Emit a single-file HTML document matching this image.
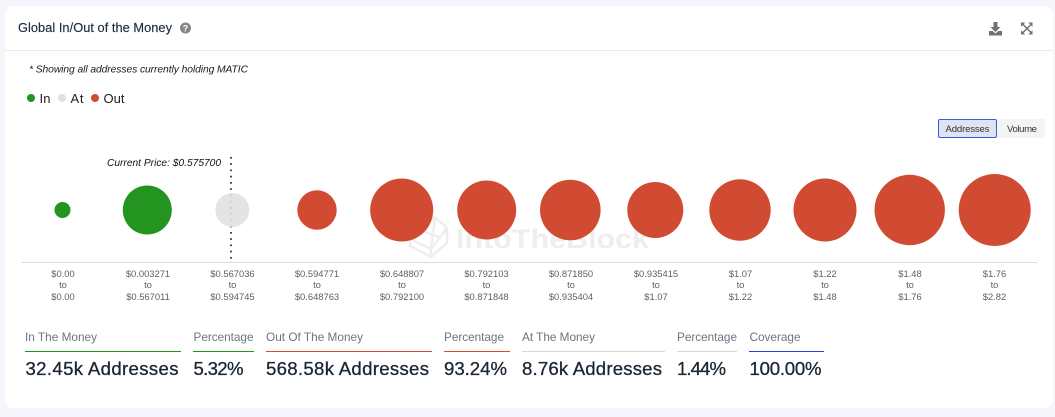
<!DOCTYPE html>
<html><head><meta charset="utf-8"><style>
html,body{margin:0;padding:0;background:#f5f6fb;width:1055px;height:417px;overflow:hidden}
svg{display:block}
text{font-family:"Liberation Sans",sans-serif}
.l{font-size:9.4px;fill:#5a5f66;text-anchor:middle}
.h{font-size:11.8px;fill:#6b7580}
.v{font-size:18.6px;fill:#1a2634;stroke:#1a2634;stroke-width:.3}
</style></head><body>
<svg width="1055" height="417" viewBox="0 0 1055 417" xmlns="http://www.w3.org/2000/svg">
<rect x="5" y="7" width="1048" height="402.500" rx="8" fill="#eceef4"/>
<rect x="5" y="6" width="1048" height="402.500" rx="8" fill="#fff"/>
<rect x="5" y="50" width="1048" height="1" fill="#e8e9ed"/>
<text x="18" y="32" font-size="12.800px" fill="#1f2c3a" stroke="#1f2c3a" stroke-width=".15" textLength="154" lengthAdjust="spacing">Global In/Out of the Money</text>
<circle cx="185.500" cy="28" r="5.500" fill="#858585"/>
<text x="185.500" y="31.500" font-size="9px" font-weight="bold" fill="#fff" text-anchor="middle">?</text>
<path d="M993.500 22h4v5h3l-5 5-5-5h3z" fill="#707070"/>
<path d="M989 31h3.500l3 2.500 3-2.500h3.500v4.500h-13z" fill="#707070"/>
<g fill="#707070"><path d="M1021 22.500h4.200l-4.200 4.200zM1032.500 22.500v4.200l-4.200-4.200zM1021 34.500v-4.200l4.200 4.200zM1032.500 34.500h-4.200l4.200-4.200z"/></g>
<path d="M1022.500 24l9 9M1031.500 24l-9 9" stroke="#707070" stroke-width="1.500" fill="none"/>
<text x="29" y="72.500" font-size="10.300px" font-style="italic" fill="#1a1a1a" textLength="219" lengthAdjust="spacing">* Showing all addresses currently holding MATIC</text>
<circle cx="31" cy="98" r="4" fill="#23941f"/>
<text x="39.500" y="103" font-size="13px" fill="#222" textLength="11" lengthAdjust="spacing">In</text>
<circle cx="62" cy="98" r="4" fill="#e0e0e0"/>
<text x="70.500" y="103" font-size="13px" fill="#222" textLength="13" lengthAdjust="spacing">At</text>
<circle cx="95" cy="98" r="4" fill="#d14b33"/>
<text x="103.500" y="103" font-size="13px" fill="#222" textLength="21" lengthAdjust="spacing">Out</text>
<rect x="938.500" y="119.500" width="58" height="18" rx="1.500" fill="#dfe3f2" stroke="#2f5fe0"/>
<text x="945.500" y="132" font-size="9.600px" fill="#333" textLength="44" lengthAdjust="spacing">Addresses</text>
<rect x="997" y="119" width="48" height="19" rx="1.500" fill="#f4f4f5"/>
<text x="1007" y="132" font-size="9.600px" fill="#333" textLength="30" lengthAdjust="spacing">Volume</text>
<g fill="none" stroke="#eeeeef" stroke-width="2.500" stroke-linejoin="round"><path d="M410 239l25-22 12 11v15l-16 14-21-11z"/><path d="M410 239l21 10 16-21M431 249v8M435 217l-4 32M420 230l21 8"/></g>
<text x="456" y="248" font-size="27px" font-weight="bold" fill="#eeeeef" textLength="193" lengthAdjust="spacingAndGlyphs">IntoTheBlock</text>
<line x1="231" y1="157" x2="231" y2="262" stroke="#111" stroke-width="1.600" stroke-dasharray="1.600 4.650"/>
<g fill="#23941f"><circle cx="62.500" cy="210" r="8"/><circle cx="147.300" cy="210" r="24.500"/></g>
<circle cx="232.300" cy="210" r="17" fill="#e0e0e0" fill-opacity=".88"/>
<g fill="#d14b33"><circle cx="317" cy="210" r="19.700"/><circle cx="401.700" cy="210" r="31.500"/><circle cx="486.700" cy="210" r="29.500"/><circle cx="570.300" cy="210" r="30.300"/><circle cx="655.300" cy="210" r="28"/><circle cx="740" cy="210" r="30.700"/><circle cx="825" cy="210" r="31.500"/><circle cx="909.700" cy="210" r="35.200"/><circle cx="994.700" cy="210" r="36"/></g>
<text x="107" y="166" font-size="10.200px" font-style="italic" fill="#111" textLength="114" lengthAdjust="spacing">Current Price: $0.575700</text>
<rect x="21" y="262" width="1016" height="1" fill="#d5dcee"/>
<g class="ls">
<text class="l" x="63" y="277">$0.00</text><text class="l" x="63" y="288">to</text><text class="l" x="63" y="300">$0.00</text>
<text class="l" x="148" y="277">$0.003271</text><text class="l" x="148" y="288">to</text><text class="l" x="148" y="300">$0.567011</text>
<text class="l" x="232.500" y="277">$0.567036</text><text class="l" x="232.500" y="288">to</text><text class="l" x="232.500" y="300">$0.594745</text>
<text class="l" x="317" y="277">$0.594771</text><text class="l" x="317" y="288">to</text><text class="l" x="317" y="300">$0.648763</text>
<text class="l" x="402" y="277">$0.648807</text><text class="l" x="402" y="288">to</text><text class="l" x="402" y="300">$0.792100</text>
<text class="l" x="486.500" y="277">$0.792103</text><text class="l" x="486.500" y="288">to</text><text class="l" x="486.500" y="300">$0.871848</text>
<text class="l" x="571" y="277">$0.871850</text><text class="l" x="571" y="288">to</text><text class="l" x="571" y="300">$0.935404</text>
<text class="l" x="656" y="277">$0.935415</text><text class="l" x="656" y="288">to</text><text class="l" x="656" y="300">$1.07</text>
<text class="l" x="740.500" y="277">$1.07</text><text class="l" x="740.500" y="288">to</text><text class="l" x="740.500" y="300">$1.22</text>
<text class="l" x="825" y="277">$1.22</text><text class="l" x="825" y="288">to</text><text class="l" x="825" y="300">$1.48</text>
<text class="l" x="910" y="277">$1.48</text><text class="l" x="910" y="288">to</text><text class="l" x="910" y="300">$1.76</text>
<text class="l" x="994.500" y="277">$1.76</text><text class="l" x="994.500" y="288">to</text><text class="l" x="994.500" y="300">$2.82</text>
</g>
<text class="h" x="25" y="341" textLength="72" lengthAdjust="spacing">In The Money</text>
<rect x="25" y="351" width="156" height="1" fill="#23941f"/>
<text class="v" x="25.500" y="375" textLength="153" lengthAdjust="spacing">32.45k Addresses</text>
<text class="h" x="193.500" y="341" textLength="60" lengthAdjust="spacing">Percentage</text>
<rect x="193" y="351" width="61" height="1" fill="#23941f"/>
<text class="v" x="193.500" y="375" textLength="50" lengthAdjust="spacing">5.32%</text>
<text class="h" x="266" y="341" textLength="97" lengthAdjust="spacing">Out Of The Money</text>
<rect x="266" y="351" width="166" height="1" fill="#d14b33"/>
<text class="v" x="266" y="375" textLength="163" lengthAdjust="spacing">568.58k Addresses</text>
<text class="h" x="444" y="341" textLength="60" lengthAdjust="spacing">Percentage</text>
<rect x="444" y="351" width="66" height="1" fill="#d14b33"/>
<text class="v" x="444" y="375" textLength="63" lengthAdjust="spacing">93.24%</text>
<text class="h" x="522" y="341" textLength="73" lengthAdjust="spacing">At The Money</text>
<rect x="522" y="351" width="143" height="1" fill="#d8d8d8"/>
<text class="v" x="522" y="375" textLength="140" lengthAdjust="spacing">8.76k Addresses</text>
<text class="h" x="677" y="341" textLength="60" lengthAdjust="spacing">Percentage</text>
<rect x="677" y="351" width="60" height="1" fill="#d8d8d8"/>
<text class="v" x="677" y="375" textLength="49" lengthAdjust="spacing">1.44%</text>
<text class="h" x="749.500" y="341" textLength="51" lengthAdjust="spacing">Coverage</text>
<rect x="749" y="351" width="75" height="1" fill="#1f3fe8"/>
<text class="v" x="749.500" y="375" textLength="72" lengthAdjust="spacing">100.00%</text>
</svg>
</body></html>
